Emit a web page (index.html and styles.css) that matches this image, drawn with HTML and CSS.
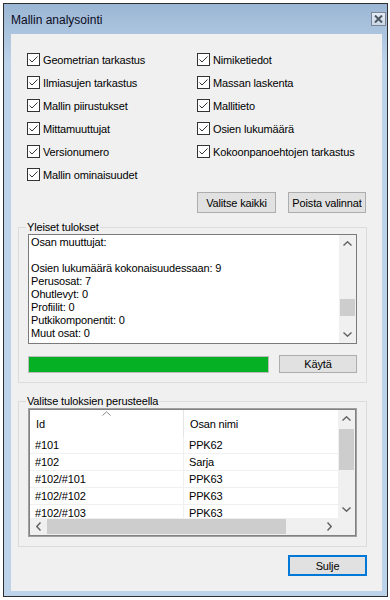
FILE: index.html
```html
<!DOCTYPE html>
<html lang="fi">
<head>
  <meta charset="UTF-8" />
  <meta name="viewport" content="width=device-width, initial-scale=1" />
  <title>Mallin analysointi</title>
  <link rel="stylesheet" href="styles.css">
</head>
<body>

  <div class="window">
    <div class="titlebar">
      <span class="title">Mallin analysointi</span>
      <span class="close">
        <svg width="9" height="8" viewBox="0 0 9 8"><path d="M1 0.5 L8 7.5 M8 0.5 L1 7.5" stroke="#4d5663" stroke-width="2"/></svg>
      </span>
    </div>

    <div class="client">
      <!-- Valinnat -->
      <div class="checks">
        <label class="chk"><span class="box"><svg width="11" height="11" viewBox="0 0 11 11"><path d="M1.5 5.5 L4 8 L9.5 2.5" stroke="#333" fill="none"/></svg></span>Geometrian tarkastus</label>
        <label class="chk"><span class="box"><svg width="11" height="11" viewBox="0 0 11 11"><path d="M1.5 5.5 L4 8 L9.5 2.5" stroke="#333" fill="none"/></svg></span>Ilmiasujen tarkastus</label>
        <label class="chk"><span class="box"><svg width="11" height="11" viewBox="0 0 11 11"><path d="M1.5 5.5 L4 8 L9.5 2.5" stroke="#333" fill="none"/></svg></span>Mallin piirustukset</label>
        <label class="chk"><span class="box"><svg width="11" height="11" viewBox="0 0 11 11"><path d="M1.5 5.5 L4 8 L9.5 2.5" stroke="#333" fill="none"/></svg></span>Mittamuuttujat</label>
        <label class="chk"><span class="box"><svg width="11" height="11" viewBox="0 0 11 11"><path d="M1.5 5.5 L4 8 L9.5 2.5" stroke="#333" fill="none"/></svg></span>Versionumero</label>
        <label class="chk"><span class="box"><svg width="11" height="11" viewBox="0 0 11 11"><path d="M1.5 5.5 L4 8 L9.5 2.5" stroke="#333" fill="none"/></svg></span>Mallin ominaisuudet</label>
        <label class="chk"><span class="box"><svg width="11" height="11" viewBox="0 0 11 11"><path d="M1.5 5.5 L4 8 L9.5 2.5" stroke="#333" fill="none"/></svg></span>Nimiketiedot</label>
        <label class="chk"><span class="box"><svg width="11" height="11" viewBox="0 0 11 11"><path d="M1.5 5.5 L4 8 L9.5 2.5" stroke="#333" fill="none"/></svg></span>Massan laskenta</label>
        <label class="chk"><span class="box"><svg width="11" height="11" viewBox="0 0 11 11"><path d="M1.5 5.5 L4 8 L9.5 2.5" stroke="#333" fill="none"/></svg></span>Mallitieto</label>
        <label class="chk"><span class="box"><svg width="11" height="11" viewBox="0 0 11 11"><path d="M1.5 5.5 L4 8 L9.5 2.5" stroke="#333" fill="none"/></svg></span>Osien lukumäärä</label>
        <label class="chk"><span class="box"><svg width="11" height="11" viewBox="0 0 11 11"><path d="M1.5 5.5 L4 8 L9.5 2.5" stroke="#333" fill="none"/></svg></span>Kokoonpanoehtojen tarkastus</label>
      </div>

      <div class="sel-btns">
        <button class="btn">Valitse kaikki</button>
        <button class="btn">Poista valinnat</button>
      </div>

      <!-- Yleiset tulokset -->
      <fieldset class="group">
        <legend>Yleiset tulokset</legend>
        <div class="textbox">
          <div class="tb-text">
            <div>Osan muuttujat:</div>
            <div>&nbsp;</div>
            <div>Osien lukumäärä kokonaisuudessaan: 9</div>
            <div>Perusosat: 7</div>
            <div>Ohutlevyt: 0</div>
            <div>Profiilit: 0</div>
            <div>Putkikomponentit: 0</div>
            <div>Muut osat: 0</div>
          </div>
          <div class="vscroll">
            <span class="arrow"><svg width="9" height="5" viewBox="0 0 9 5"><path d="M0.5 4.5 L4.5 0.8 L8.5 4.5" stroke="#606060" stroke-width="1.4" fill="none"/></svg></span>
            <span class="track tb-track"><span class="thumb"></span></span>
            <span class="arrow"><svg width="9" height="5" viewBox="0 0 9 5"><path d="M0.5 0.5 L4.5 4.2 L8.5 0.5" stroke="#606060" stroke-width="1.4" fill="none"/></svg></span>
          </div>
        </div>
        <div class="run-row">
          <div class="progress"><div class="fill" style="width:100%"></div></div>
          <button class="btn run">Käytä</button>
        </div>
      </fieldset>

      <!-- Valitse tuloksien perusteella -->
      <fieldset class="group pick">
        <legend>Valitse tuloksien perusteella</legend>
        <div class="listview">
          <div class="lv-inner">
            <div class="lv-main">
              <div class="lv-cols">
                <div class="lv-head">
                  <div class="th th-id">
                    <svg class="sort" width="9" height="5" viewBox="0 0 9 5"><path d="M0.5 4.5 L4.5 0.8 L8.5 4.5" stroke="#8a8a8a" fill="none"/></svg>
                    Id
                  </div>
                  <div class="th">Osan nimi</div>
                </div>
                <div class="lv-row"><div class="td">#101</div><div class="td">PPK62</div></div>
                <div class="lv-row"><div class="td">#102</div><div class="td">Sarja</div></div>
                <div class="lv-row"><div class="td">#102/#101</div><div class="td">PPK63</div></div>
                <div class="lv-row"><div class="td">#102/#102</div><div class="td">PPK63</div></div>
                <div class="lv-row"><div class="td">#102/#103</div><div class="td">PPK63</div></div>
              </div>
              <div class="vscroll">
                <span class="arrow"><svg width="9" height="5" viewBox="0 0 9 5"><path d="M0.5 4.5 L4.5 0.8 L8.5 4.5" stroke="#606060" stroke-width="1.4" fill="none"/></svg></span>
                <span class="track lv-track"><span class="thumb"></span></span>
                <span class="arrow"><svg width="9" height="5" viewBox="0 0 9 5"><path d="M0.5 0.5 L4.5 4.2 L8.5 0.5" stroke="#606060" stroke-width="1.4" fill="none"/></svg></span>
              </div>
            </div>
            <div class="hscroll-row">
              <div class="hscroll">
                <span class="harrow"><svg width="5" height="9" viewBox="0 0 5 9"><path d="M4.5 0.5 L0.8 4.5 L4.5 8.5" stroke="#606060" stroke-width="1.4" fill="none"/></svg></span>
                <span class="htrack"><span class="hthumb"></span></span>
                <span class="harrow"><svg width="5" height="9" viewBox="0 0 5 9"><path d="M0.5 0.5 L4.2 4.5 L0.5 8.5" stroke="#606060" stroke-width="1.4" fill="none"/></svg></span>
              </div>
              <div class="corner"></div>
            </div>
          </div>
        </div>
      </fieldset>

      <div class="footer">
        <button class="btn default">Sulje</button>
      </div>
    </div>
  </div>

</body>
</html>
```

FILE: styles.css
```css
* {
  box-sizing: border-box;
}
body {
  margin: 0;
  background: #fff;
  font-family: 'Liberation Sans', Arial, sans-serif;
  font-size: 11px;
  letter-spacing: -0.15px;
  color: #000;
}
.window {
  margin: 3px 0 0 3px;
  width: 385px;
  height: 594px;
  border: 1px solid #2f2f2f;
  background: linear-gradient(#9bb6d4, #bdd3ea 60px, #bcd3ea);
  padding: 0 5px 5px 7px;
}
.titlebar {
  height: 30px;
  display: flex;
  align-items: center;
  justify-content: space-between;
  margin-right: -4px;
}
.title {
  font-size: 12px;
  letter-spacing: 0;
  color: #0b0b1e;
  padding-top: 1px;
}
.close {
  width: 15px;
  height: 14px;
  border: 1px solid #7b8797;
  background: linear-gradient(#e4ecf5, #c9d7e7);
  display: flex;
  align-items: center;
  justify-content: center;
}
.client {
  height: 557px;
  background: #f0f0f0;
}
.checks {
  display: grid;
  grid-template-columns: 170px 1fr;
  grid-template-rows: repeat(6, 23px);
  grid-auto-flow: column;
  padding: 14px 0 0 16px;
}
.chk {
  display: flex;
  align-items: center;
  gap: 3px;
  white-space: nowrap;
}
.box {
  width: 13px;
  height: 13px;
  border: 1px solid #333;
  background: #fff;
  display: flex;
}
.sel-btns {
  display: flex;
  justify-content: flex-end;
  gap: 12px;
  margin-top: 6px;
  padding-right: 16px;
}
.btn {
  font-family: 'Liberation Sans', Arial, sans-serif;
  font-size: 11px;
  letter-spacing: -0.15px;
  color: #000;
  background: #e1e1e1;
  border: 1px solid #adadad;
  width: 79px;
  height: 21px;
  padding: 0;
}
.sel-btns .btn + .btn {
  width: 78px;
}
.btn.default {
  border: 2px solid #0078d7;
}
.group {
  margin: 7px 15px 0 7px;
  border: 1px solid #dcdcdc;
  padding: 0 9px 9px 9px;
  min-width: 0;
}
.group legend {
  line-height: 14px;
  padding: 0 1px;
  margin-left: -2px;
}
.group.pick {
  margin-top: 11px;
}
.textbox {
  height: 110px;
  border: 1px solid #7a7a7a;
  background: #fff;
  display: flex;
}
.tb-text {
  flex: 1;
  padding: 1px 0 0 2px;
  line-height: 13px;
  overflow: hidden;
}
.vscroll {
  width: 17px;
  flex-shrink: 0;
  background: #f0f0f0;
  display: flex;
  flex-direction: column;
}
.arrow {
  height: 17px;
  display: flex;
  align-items: center;
  justify-content: center;
}
.track {
  flex: 1;
  display: flex;
  flex-direction: column;
}
.thumb {
  background: #cdcdcd;
  margin: 0 1px;
}
.tb-track .thumb {
  margin-top: 47px;
  height: 17px;
}
.lv-track .thumb {
  margin-top: 2px;
  height: 41px;
}
.run-row {
  display: flex;
  align-items: center;
  gap: 10px;
  margin-top: 11px;
}
.progress {
  width: 241px;
  height: 17px;
  border: 1px solid #bcbcbc;
  background: #e6e6e6;
}
.fill {
  height: 100%;
  background: #06b025;
}
.btn.run {
  width: 78px;
  height: 18px;
}
.listview {
  height: 129px;
  border: 1px solid #a0a0a0;
  background: #fff;
}
.lv-inner {
  height: 100%;
  border: 1px solid #828282;
  display: flex;
  flex-direction: column;
}
.lv-main {
  flex: 1;
  display: flex;
  overflow: hidden;
}
.lv-cols {
  flex: 1;
  min-width: 0;
  overflow: hidden;
}
.lv-head {
  display: flex;
  height: 27px;
}
.th {
  position: relative;
  display: flex;
  align-items: center;
  flex-shrink: 0;
  padding-left: 6px;
  width: 200px;
}
.th-id {
  width: 154px;
  border-right: 1px solid #e5e5e5;
}
.sort {
  position: absolute;
  top: 1px;
  left: 72px;
}
.lv-row {
  display: flex;
  height: 17px;
  border-bottom: 1px solid #f0f0f0;
}
.td {
  display: flex;
  align-items: center;
  flex-shrink: 0;
  padding-left: 5px;
  width: 200px;
}
.td:first-child {
  width: 154px;
  border-right: 1px solid #f0f0f0;
}
.hscroll-row {
  display: flex;
  height: 17px;
}
.hscroll {
  flex: 1;
  display: flex;
  background: #f0f0f0;
}
.harrow {
  width: 17px;
  display: flex;
  align-items: center;
  justify-content: center;
}
.htrack {
  flex: 1;
  display: flex;
  padding: 1px 0;
}
.hthumb {
  width: 239px;
  background: #cdcdcd;
}
.corner {
  width: 17px;
  flex-shrink: 0;
  background: #f0f0f0;
}
.footer {
  display: flex;
  justify-content: flex-end;
  margin-top: 8px;
  padding-right: 15px;
}
```
